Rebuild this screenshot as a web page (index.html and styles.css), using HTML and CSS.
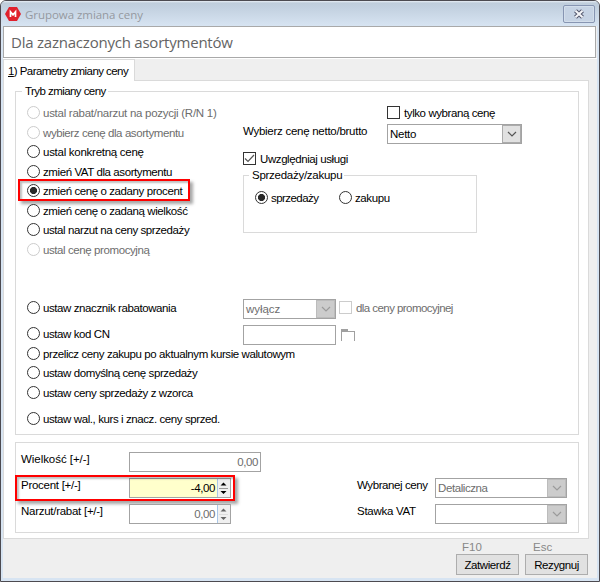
FILE: index.html
```html
<!DOCTYPE html>
<html lang="pl">
<head>
<meta charset="utf-8">
<title>Grupowa zmiana ceny</title>
<link rel="stylesheet" href="styles.css">
</head>
<body>
<div class="window">
  <div class="titlebar">
    <svg class="logo" width="16" height="14" viewBox="0 0 16 14"><path d="M4 0h8l4 7-4 7H4L0 7z" fill="#e0202c"/><path d="M5.500 10V4.800L8 7.800l2.500-3V10" fill="none" stroke="#fff" stroke-width="1.700"/></svg>
    <span class="title">Grupowa zmiana ceny</span>
    <span class="close"><svg width="12" height="10" viewBox="0 0 12 10"><path d="M2.500 1.800l7 6.400M9.500 1.800l-7 6.400" stroke="#565a70" stroke-width="4.200"/><path d="M2.500 1.800l7 6.400M9.500 1.800l-7 6.400" stroke="#f4f5f8" stroke-width="2.100"/></svg></span>
  </div>
  <div class="client">
    <div class="header">Dla zaznaczonych asortymentów</div>
    <div class="tabs"><div class="tab tight"><u>1</u>) Parametry zmiany ceny</div><div class="rest"></div></div>
    <div class="page">
      <section class="group mode">
        <div class="legend tight">Tryb zmiany ceny</div>
        <div class="options">
          <label class="opt off"><i class="radio"></i><span class="loose">ustal rabat/narzut na pozycji (R/N 1)</span></label>
          <label class="opt off"><i class="radio"></i><span>wybierz cenę dla asortymentu</span></label>
          <label class="opt"><i class="radio"></i><span class="loose">ustal konkretną cenę</span></label>
          <label class="opt"><i class="radio"></i><span>zmień VAT dla asortymentu</span></label>
          <label class="opt"><i class="radio on"></i><span>zmień cenę o zadany procent</span><b class="mark mark-option"></b></label>
          <label class="opt"><i class="radio"></i><span>zmień cenę o zadaną wielkość</span></label>
          <label class="opt"><i class="radio"></i><span>ustal narzut na ceny sprzedaży</span></label>
          <label class="opt off"><i class="radio"></i><span>ustal cenę promocyjną</span></label>
          <label class="opt"><i class="radio"></i><span>ustaw znacznik rabatowania</span></label>
          <label class="opt"><i class="radio"></i><span>ustaw kod CN</span></label>
          <label class="opt"><i class="radio"></i><span>przelicz ceny zakupu po aktualnym kursie walutowym</span></label>
          <label class="opt"><i class="radio"></i><span>ustaw domyślną cenę sprzedaży</span></label>
          <label class="opt"><i class="radio"></i><span>ustaw ceny sprzedaży z wzorca</span></label>
          <label class="opt"><i class="radio"></i><span>ustaw wal., kurs i znacz. ceny sprzed.</span></label>
        </div>
        <div class="settings">
          <label class="opt only"><i class="check"></i><span>tylko wybraną cenę</span></label>
          <div class="price"><span class="price-label loose">Wybierz cenę netto/brutto</span>
            <div class="select"><span class="loose">Netto</span><i class="arrow"><svg width="10" height="6" viewBox="0 0 10 6"><path d="M1 1l4 4 4-4"/></svg></i></div></div>
          <label class="opt services"><i class="check"><svg width="11" height="11" viewBox="0 0 11 11"><path d="M1 5.500l3 3L10 2"/></svg></i><span>Uwzględniaj usługi</span></label>
          <section class="group kind">
            <div class="legend loose">Sprzedaży/zakupu</div>
            <label class="opt"><i class="radio on"></i><span class="tight">sprzedaży</span></label>
            <label class="opt"><i class="radio"></i><span>zakupu</span></label>
          </section>
          <div class="discount">
            <div class="select off"><span class="wide-text">wyłącz</span><i class="arrow"><svg width="10" height="6" viewBox="0 0 10 6"><path d="M1 1l4 4 4-4"/></svg></i></div>
            <label class="opt off"><i class="check"></i><span class="tight">dla ceny promocyjnej</span></label>
          </div>
          <div class="code"><div class="input"></div><svg width="15" height="12" viewBox="0 0 15 12"><path d="M0 0h7v2h7v10h-1V3H1v9H0z" fill="#a0a0a0"/></svg></div>
        </div>
      </section>
      <section class="group values">
        <div class="amounts">
          <span class="lbl wide-text">Wielkość [+/-]</span><div class="input wide off"><span>0,00</span></div>
          <span class="lbl loose">Procent [+/-]</span><div class="input active"><span>-4,00</span><i class="spin"><svg width="9" height="16" viewBox="0 0 9 16"><path d="M1.500 5.500h6l-3-3zM1.500 11h6l-3 3z"/></svg></i><b class="mark mark-value"></b></div>
          <span class="lbl loose">Narzut/rabat [+/-]</span><div class="input off"><span>0,00</span><i class="spin"><svg width="9" height="16" viewBox="0 0 9 16"><path d="M1.500 5.500h6l-3-3zM1.500 11h6l-3 3z"/></svg></i></div>
        </div>
        <div class="choices">
          <span class="lbl">Wybranej ceny</span><div class="select off"><span>Detaliczna</span><i class="arrow"><svg width="10" height="6" viewBox="0 0 10 6"><path d="M1 1l4 4 4-4"/></svg></i></div>
          <span class="lbl loose">Stawka VAT</span><div class="select off"><span></span><i class="arrow"><svg width="10" height="6" viewBox="0 0 10 6"><path d="M1 1l4 4 4-4"/></svg></i></div>
        </div>
      </section>
    </div>
    <div class="footer">
      <div class="action"><span class="key">F10</span><div class="button">Zatwierdź</div></div>
      <div class="action"><span class="key">Esc</span><div class="button">Rezygnuj</div></div>
    </div>
  </div>
</div>
</body>
</html>
```
FILE: styles.css
```css
* { box-sizing: border-box; }
body { margin: 0; width: 600px; height: 582px; overflow: hidden; background: #fff;
  font: 11.5px/15px "Liberation Sans", Arial, sans-serif; letter-spacing: -0.41px; color: #000; }
.loose { letter-spacing: -0.27px; }
.tight { letter-spacing: -0.56px; }
.wide-text { letter-spacing: -0.05px; }
i { font-style: normal; }
svg { display: block; }
.window { width: 600px; height: 582px; border: 1px solid #4c4a50; border-radius: 6px 6px 0 0;
  background: #d7e4f2; padding: 0 2px; overflow: hidden; }
.titlebar { height: 25px; margin: 0 -2px; padding: 1px 4px 0; display: flex; align-items: center;
  background: linear-gradient(#e8eef5 0, #bfcddb 2px, #c3d1e0 7px, #d7e4f2 25px); }
.logo { margin: 0 4px 0 0; }
.title { flex: 1; font: 11.5px/16px "Open Sans", "Noto Sans", sans-serif; letter-spacing: -0.05px; color: #9599a0; padding-top: 2px; }
.close { width: 32px; height: 18px; margin: -1px 0 0; border: 1px solid #8795b2; border-radius: 2px;
  box-shadow: inset 0 0 0 1px #d3deeb; display: flex; align-items: center; justify-content: center; background: #c6d3e4; }
.client { background: #efefef; height: 552px; width: 594px; display: flex; flex-direction: column; }
.header { width: 593px; height: 32px; border: 1px solid #a9a9a9; background: #fff; padding-left: 7px;
  font: 15px/30px "Open Sans", "Noto Sans", sans-serif; letter-spacing: -0.22px; color: #646464; }
.tabs { display: flex; height: 23px; border-top: 1px solid #fff; }
.tab { width: 132px; height: 22px; background: #fff; border: 1px solid #dadada; border-bottom: 0; padding: 4px 0 0 4px; white-space: nowrap; }
.rest { flex: 0 0 454px; border-bottom: 1px solid #dadada; }
.page { width: 586px; height: 458px; background: #fff; border: 1px solid #dadada; border-top: 0; padding: 10px 9px 0 11px; }
.group { position: relative; border: 1px solid #dadada; }
.legend { position: absolute; top: -8px; left: 6px; background: #fff; padding: 0 2px 0 3px; white-space: nowrap; }
.mode { width: 564px; height: 344px; display: flex; padding: 14px 0 0 11px; }
.options { width: 216px; display: grid; grid-template-rows: 20px 19px 20px 19px 20px 19px 20px 58px 26px 20px 19px 20px 26px 13px; }
.opt { position: relative; display: flex; height: 13px; white-space: nowrap; }
.opt > span { margin-left: 3px; }
.radio { width: 13px; height: 13px; border: 1px solid #333; border-radius: 50%; background: #fff; flex: none; }
.radio.on { background: radial-gradient(circle, #2a2a2a 3.2px, #fff 3.9px); }
.check { width: 13px; height: 13px; border: 1px solid #333; flex: none; }
.check path, .arrow path { fill: none; stroke: #555; stroke-width: 1.2; }
.check + span { margin-left: 4px; }
.off { color: #6d6d6d; }
.opt.off .radio, .opt.off .check { border-color: #ccc; }
.mark { position: absolute; border: 2px solid #f00; box-shadow: 3px 3px 3px rgba(0,0,0,.35), inset 2px 2px 2px rgba(0,0,0,.25); }
.mark-option { left: -9px; top: -5px; width: 172px; height: 22px; }
.mark-value { left: -115px; top: -4px; width: 220px; height: 26px; }
.settings { flex: 1; }
.only { margin-left: 144px; }
.price { display: flex; margin-top: 5px; }
.price-label { width: 144px; white-space: nowrap; }
.select { width: 135px; height: 20px; border: 1px solid #a3a3a3; background: #fff; display: flex; }
.select > span { flex: 1; padding: 2px 0 0 2px; }
.arrow { width: 19px; border: 1px solid #ababab; background: #e1e1e1; display: flex; align-items: center; justify-content: center; }
.off .arrow { background: #ccc; border-color: #bcbcbc; }
.off .arrow path { stroke: #9b9b9b; }
.services { margin-top: 8px; }
.kind { width: 234px; height: 58px; margin-top: 10px; padding: 15px 0 0 11px; display: flex; gap: 21px; }
.kind .opt { width: 63px; }
.kind .legend { left: 5px; }
.discount { display: flex; margin-top: 66px; }
.discount .select { width: 93px; }
.discount .opt { margin: 2px 0 0 3px; }
.code { display: flex; margin-top: 6px; }
.code svg { margin: 4px 0 0 5px; }
.input { position: relative; width: 102px; height: 20px; border: 1px solid #a3a3a3; background: #fff; display: flex; }
.code .input { width: 93px; }
.input > span { flex: 1; text-align: right; padding: 2px 2px 0 0; }
.input.wide { width: 132px; }
.input.active { background: #ffc; }
.spin { width: 13px; background: #f0f0f0; border-left: 1px solid #a9c7e8; padding: 1px; }
.spin svg { background: linear-gradient(#999, #999) 0 8px / 9px 1px no-repeat; }
.off .spin svg { background: linear-gradient(#ddd, #ddd) 0 8px / 9px 1px no-repeat; }
.off .spin path { fill: #666; }
.values { width: 564px; height: 91px; margin-top: 7px; padding: 9px 0 0 5px; display: flex; }
.amounts { width: 336px; display: grid; grid-template-columns: 108px 132px; grid-auto-rows: 20px; row-gap: 6px; align-content: start; }
.choices { margin-top: 26px; display: grid; grid-template-columns: 78px 132px; grid-auto-rows: 20px; row-gap: 6px; align-content: start; }
.choices .select { width: 132px; }
.lbl { white-space: nowrap; }
.footer { width: 585px; display: flex; justify-content: flex-end; gap: 6px; padding-top: 1px; }
.action { width: 63px; }
.key { display: block; height: 14px; padding-left: 6px; color: #888; letter-spacing: 0; }
.action + .action .key { padding-left: 8px; }
.button { height: 21px; border: 1px solid #adadad; background: #e1e1e1; text-align: center; line-height: 20px; }
```
